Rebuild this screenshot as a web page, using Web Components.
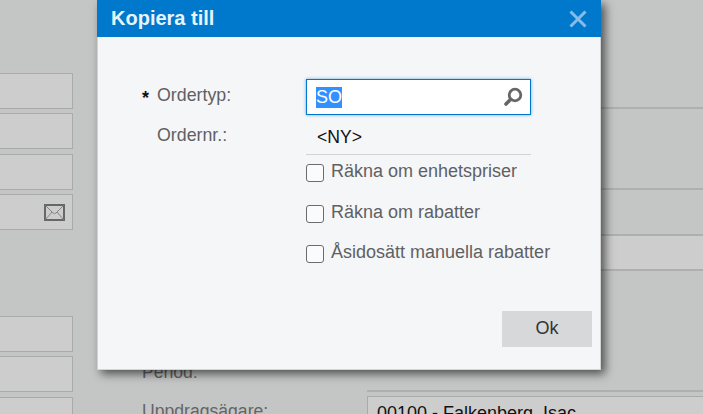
<!DOCTYPE html>
<html lang="sv">
<head>
<meta charset="utf-8">
<title>Kopiera till</title>
<style>
  html, body { margin: 0; padding: 0; }
  body { width: 703px; height: 414px; overflow: hidden; font: 17.6px "Liberation Sans", Arial, sans-serif; }
</style>
</head>
<body>
<x-screen>
  <x-bg-field slot="left"></x-bg-field>
  <x-bg-field slot="left"></x-bg-field>
  <x-bg-field slot="left"></x-bg-field>
  <x-bg-field slot="left" mail></x-bg-field>
  <x-bg-field slot="left" spaced></x-bg-field>
  <x-bg-field slot="left"></x-bg-field>
  <x-bg-field slot="left"></x-bg-field>

  <x-dialog heading="Kopiera till">
    <x-form-row label="Ordertyp:" required><x-lookup value="SO"></x-lookup></x-form-row>
    <x-form-row label="Ordernr.:"><x-static-value>&lt;NY&gt;</x-static-value></x-form-row>
    <x-form-row><x-check>Räkna om enhetspriser</x-check></x-form-row>
    <x-form-row><x-check>Räkna om rabatter</x-check></x-form-row>
    <x-form-row><x-check>Åsidosätt manuella rabatter</x-check></x-form-row>
    <x-button slot="footer">Ok</x-button>
  </x-dialog>
</x-screen>

<script>
// the greyed out order form behind the dialog
class XScreen extends HTMLElement {
  constructor() {
    super();
    this.shadow = this.attachShadow({ mode: 'open' });
    this.shadow.innerHTML = `
      <style>
        :host {
          display: grid;
          grid-template-columns: 73px 225px 1fr;
          column-gap: 0;
          position: relative;
          width: 703px;
          height: 414px;
          overflow: hidden;
          background: #c4c6c5;
          color: #636566;
        }
        .left { display: flex; flex-direction: column; padding-top: 73px; }
        .mid {
          display: flex;
          flex-direction: column;
          gap: 18px;
          padding: 362px 0 0 69px;
          width: 225px;
          box-sizing: content-box;
          white-space: nowrap;
        }
        .right { display: flex; flex-direction: column; margin-left: 69px; }
        .band { border-bottom: 2px solid #aeb0af; box-sizing: border-box; }
        .band.light { background: #cdcdcd; }
        .value {
          margin-top: 4px;
          height: 30px;
          padding: 6px 0 0 9px;
          box-sizing: border-box;
          background: #cdcdcd;
          border: 1px solid #a9abaa;
          border-right: 0;
          color: #111;
          font-size: 18px;
          white-space: nowrap;
        }
      </style>
      <div class="left"><slot name="left"></slot></div>
      <div class="mid"><span>Period:</span><span>Uppdragsägare:</span></div>
      <div class="right">
        <div class="band" style="height:109px"></div>
        <div class="band" style="height:81px"></div>
        <div class="band" style="height:46px"></div>
        <div class="band light" style="height:35px"></div>
        <div class="band" style="height:121px"></div>
        <div class="value">00100 - Falkenberg, Isac</div>
      </div>
      <slot></slot>
    `;
  }
}

class XBgField extends HTMLElement {
  constructor() {
    super();
    this.shadow = this.attachShadow({ mode: 'open' });
    const mail = this.hasAttribute('mail') ? `
      <svg width="21" height="17" viewBox="0 0 21 17">
        <rect x="1" y="1" width="19" height="15" fill="#cdcdcd" stroke="#666867" stroke-width="2"/>
        <path d="M1.500 1.500 9 9q1.500 1.300 3 0l7.500-7.500M1.500 15.500 8 8M19.500 15.500 13 8" fill="none" stroke="#858786"/>
      </svg>` : '';
    this.shadow.innerHTML = `
      <style>
        :host {
          display: flex;
          align-items: center;
          justify-content: flex-end;
          height: 36px;
          box-sizing: border-box;
          margin-bottom: 4.400px;
          padding-right: 7px;
          background: #cdcdcd;
          border: 1px solid #a9abaa;
          border-left: 0;
        }
        :host([spaced]) { margin-top: 81.400px; }
        svg { display: block; }
      </style>
      ${mail}
    `;
  }
}

class XDialog extends HTMLElement {
  constructor() {
    super();
    this.shadow = this.attachShadow({ mode: 'open' });
    this.shadow.innerHTML = `
      <style>
        :host {
          position: absolute;
          left: 97px;
          top: 0;
          width: 504px;
          height: 370px;
          box-sizing: border-box;
          display: flex;
          flex-direction: column;
          background: #f5f6f8;
          border: 1px solid #d2d3d4;
          border-top: 0;
          box-shadow: 4px 4px 9px rgba(0, 0, 0, .6);
        }
        header {
          flex: none;
          height: 37px;
          margin: 0 -1px;
          padding: 0 14px;
          display: flex;
          align-items: center;
          justify-content: space-between;
          background: #0079cc;
          color: #e9f3fb;
          font-weight: bold;
          font-size: 20px;
        }
        svg { display: block; }
        .body { flex: 1; padding: 42px 0 0 44px; }
        footer { display: flex; justify-content: flex-end; padding: 0 8px 22px 0; }
      </style>
      <header>
        <span>${this.getAttribute('heading')}</span>
        <svg width="18" height="18" viewBox="0 0 18 18"><path d="M1.500 1.500l15 15M16.500 1.500l-15 15" stroke="#86bde6" stroke-width="3" fill="none"/></svg>
      </header>
      <div class="body"><slot></slot></div>
      <footer><slot name="footer"></slot></footer>
    `;
  }
}

class XFormRow extends HTMLElement {
  constructor() {
    super();
    this.shadow = this.attachShadow({ mode: 'open' });
    const label = this.getAttribute('label') || '';
    const required = this.hasAttribute('required');
    this.shadow.innerHTML = `
      <style>
        :host { display: grid; grid-template-columns: 15px 149px 225px; align-items: center; color: #5e6164; }
        .star { color: #111; font-size: 18px; font-weight: bold; padding-top: 2px; }
        .label { font-size: 17.800px; }
        .up { padding-bottom: 3px; }
      </style>
      <span class="star">${required ? '*' : ''}</span>
      <span class="label ${required ? 'up' : ''}">${label}</span>
      <div><slot></slot></div>
    `;
  }
}

class XLookup extends HTMLElement {
  constructor() {
    super();
    this.shadow = this.attachShadow({ mode: 'open' });
    this.shadow.innerHTML = `
      <style>
        :host {
          display: flex;
          align-items: center;
          justify-content: space-between;
          height: 36px;
          box-sizing: border-box;
          padding: 0 7px 0 9px;
          background: #fff;
          border: 1px solid #0079cc;
          box-shadow: 0 0 3px rgba(0, 121, 204, .6);
        }
        .sel { background: #3390ff; color: #fff; font-size: 18px; line-height: 21px; display: block; }
        svg { display: block; }
      </style>
      <span class="sel">${this.getAttribute('value')}</span>
      <svg width="20" height="20" viewBox="0 0 20 20">
        <circle cx="12" cy="8" r="5.800" fill="none" stroke="#666" stroke-width="2.800"/>
        <path d="M7.500 12.500 3 17" stroke="#666" stroke-width="3.600" stroke-linecap="round"/>
      </svg>
    `;
  }
}

class XStaticValue extends HTMLElement {
  constructor() {
    super();
    this.shadow = this.attachShadow({ mode: 'open' });
    this.shadow.innerHTML = `
      <style>
        :host {
          display: block;
          height: 38px;
          box-sizing: border-box;
          margin-top: 2px;
          padding: 10px 0 0 11px;
          color: #111;
          border-bottom: 1px solid #d1d3d5;
          line-height: 20px;
        }
      </style>
      <slot></slot>
    `;
  }
}

class XCheck extends HTMLElement {
  constructor() {
    super();
    this.shadow = this.attachShadow({ mode: 'open' });
    this.shadow.innerHTML = `
      <style>
        :host { display: flex; gap: 7px; height: 40.500px; padding-top: 8px; box-sizing: border-box; white-space: nowrap; font-size: 18px; }
        input {
          appearance: none;
          flex: none;
          width: 18px;
          height: 18px;
          margin: 1px 0 0;
          background: #fbfbfc;
          border: 1.500px solid #6a6c6e;
          border-radius: 3px;
          box-sizing: border-box;
        }
        span { line-height: 18px; margin-top: -1px; }
      </style>
      <input type="checkbox">
      <span><slot></slot></span>
    `;
  }
}

class XButton extends HTMLElement {
  constructor() {
    super();
    this.shadow = this.attachShadow({ mode: 'open' });
    this.shadow.innerHTML = `
      <style>
        :host {
          display: flex;
          align-items: center;
          justify-content: center;
          width: 90px;
          height: 36px;
          padding-bottom: 2px;
          box-sizing: border-box;
          background: #d6d8da;
          color: #333;
          font-size: 18px;
        }
      </style>
      <slot></slot>
    `;
  }
}

customElements.define('x-screen', XScreen);
customElements.define('x-bg-field', XBgField);
customElements.define('x-dialog', XDialog);
customElements.define('x-form-row', XFormRow);
customElements.define('x-lookup', XLookup);
customElements.define('x-static-value', XStaticValue);
customElements.define('x-check', XCheck);
customElements.define('x-button', XButton);
</script>
</body>
</html>
